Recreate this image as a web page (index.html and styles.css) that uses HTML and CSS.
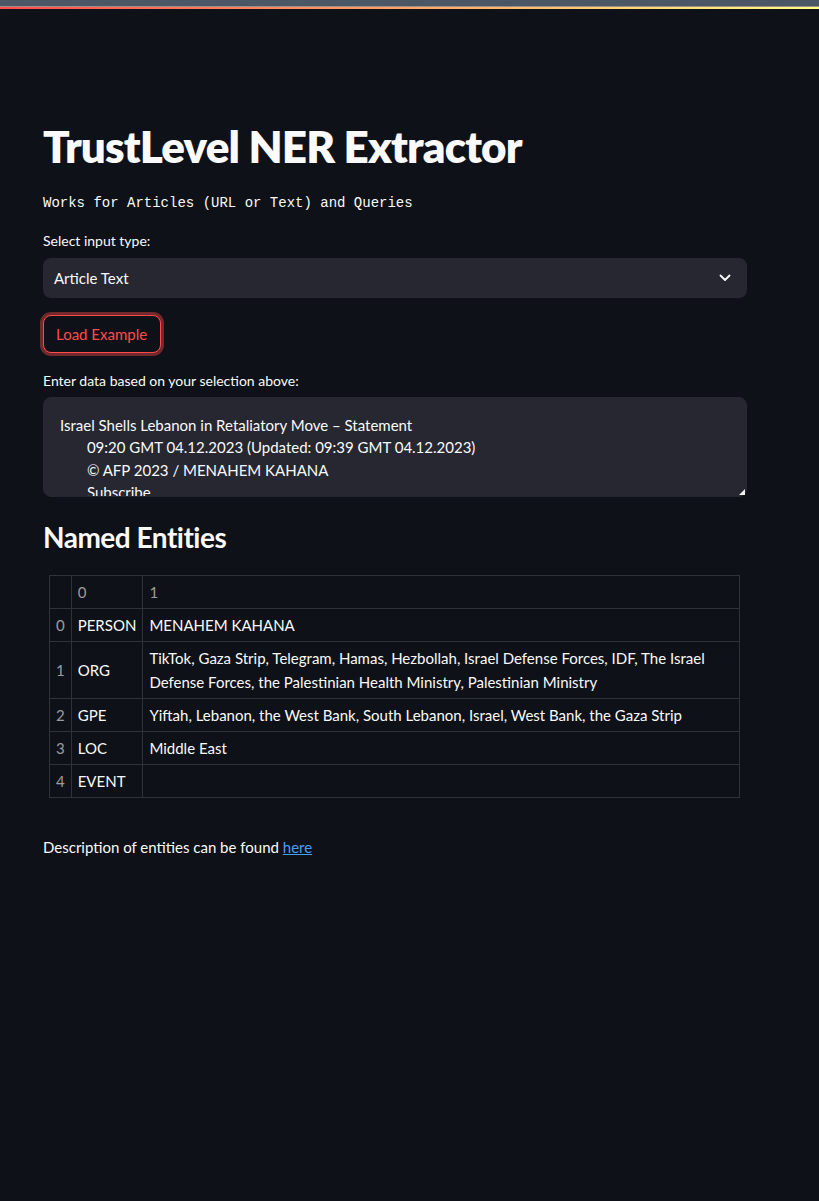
FILE: index.html
```html
<!DOCTYPE html>
<html lang="en">
<head>
<meta charset="utf-8">
<title>TrustLevel NER Extractor</title>
<link rel="stylesheet" href="styles.css">
</head>
<body>
<div class="chrome"></div>
<div class="chrome-line"></div>
<div class="decoration"></div>
<main class="main">
  <h1 class="title">TrustLevel NER Extractor</h1>
  <p class="subtitle">Works for Articles (URL or Text) and Queries</p>

  <label class="field-label label-select">Select input type:</label>
  <div class="select">
    <span class="select-value">Article Text</span>
    <svg class="chevron" width="12" height="8" viewBox="0 0 12 8"><path d="M1.5 1.5 L6 6 L10.5 1.5" fill="none" stroke="#fafafa" stroke-width="1.8" stroke-linecap="round" stroke-linejoin="round"/></svg>
  </div>

  <div class="button-row"><button class="btn">Load Example</button></div>

  <label class="field-label label-text">Enter data based on your selection above:</label>
  <div class="textarea-wrap">
    <textarea class="textarea">Israel Shells Lebanon in Retaliatory Move – Statement
       09:20 GMT 04.12.2023 (Updated: 09:39 GMT 04.12.2023)
       © AFP 2023 / MENAHEM KAHANA
       Subscribe
       The Israel Defense Forces said it shelled the area.</textarea>
    <span class="resizer"></span>
  </div>

  <h3 class="section-title">Named Entities</h3>

  <div class="table-wrap">
    <table class="table">
      <thead>
        <tr><th class="idx"></th><th class="c0">0</th><th>1</th></tr>
      </thead>
      <tbody>
        <tr><th class="idx">0</th><td>PERSON</td><td>MENAHEM KAHANA</td></tr>
        <tr><th class="idx">1</th><td>ORG</td><td>TikTok, Gaza Strip, Telegram, Hamas, Hezbollah, Israel Defense Forces, IDF, The Israel Defense Forces, the Palestinian Health Ministry, Palestinian Ministry</td></tr>
        <tr><th class="idx">2</th><td>GPE</td><td>Yiftah, Lebanon, the West Bank, South Lebanon, Israel, West Bank, the Gaza Strip</td></tr>
        <tr><th class="idx">3</th><td>LOC</td><td>Middle East</td></tr>
        <tr><th class="idx">4</th><td>EVENT</td><td></td></tr>
      </tbody>
    </table>
  </div>

  <p class="desc">Description of entities can be found <a href="#">here</a></p>
</main>
</body>
</html>
```
FILE: styles.css
```css
html, body {
  margin: 0;
  padding: 0;
  background: #0e1117;
  color: #fafafa;
  font-family: Lato, "Open Sans", sans-serif;
  color-scheme: dark;
}

.chrome {
  height: 6px;
  background: #4b5764;
}
.chrome-line {
  height: 1px;
  background: #9a8f88;
}
.decoration {
  height: 2px;
  background: linear-gradient(90deg, rgb(255, 75, 75), rgb(255, 253, 128));
}

.main {
  width: 704px;
  padding-left: 43px;
  display: flex;
  flex-direction: column;
  align-items: flex-start;
}

.title {
  margin: 111px 0 0 0;
  font-size: 44px;
  line-height: 52px;
  font-weight: 800;
  letter-spacing: -0.85px;
}

.subtitle {
  margin: 21px 0 0 0;
  font-family: "Liberation Mono", "DejaVu Sans Mono", monospace;
  font-size: 14px;
  line-height: 20px;
}

.field-label {
  font-size: 14px;
  line-height: 20px;
}
.label-select { margin-top: 18px; }
.label-text { margin-top: 18px; }

.select {
  margin-top: 7px;
  width: 704px;
  height: 40px;
  box-sizing: border-box;
  background: #262730;
  border-radius: 8px;
  display: flex;
  align-items: center;
  justify-content: space-between;
  padding: 0 16px 0 11px;
  font-size: 15px;
}
.chevron { display: block; }

.button-row { margin-top: 17px; }
.btn {
  font-family: inherit;
  font-size: 15px;
  line-height: 24px;
  color: rgb(255, 75, 75);
  background: #0e1117;
  border: 1px solid rgb(255, 75, 75);
  border-radius: 8px;
  padding: 6px 13px 6px 12px;
  box-shadow: 0 0 0 3px rgba(255, 75, 75, 0.42);
}

.textarea-wrap {
  margin-top: 6px;
  position: relative;
  width: 704px;
  height: 100px;
}
.textarea {
  display: block;
  width: 704px;
  height: 100px;
  box-sizing: border-box;
  background: #262730;
  color: #fafafa;
  border: 1px solid #262730;
  border-radius: 8px;
  padding: 16px 16px;
  font-family: inherit;
  font-size: 15px;
  line-height: 22.4px;
  resize: none;
  overflow: hidden;
  outline: none;
}
.resizer {
  position: absolute;
  right: 2px;
  bottom: 2px;
  width: 0;
  height: 0;
  border-style: solid;
  border-width: 0 0 6px 6px;
  border-color: transparent transparent #f0f0f0 transparent;
}

.section-title {
  margin: 22px 0 0 0;
  font-size: 28px;
  line-height: 36px;
  font-weight: 700;
  letter-spacing: -0.5px;
}

.table-wrap {
  margin-top: 20px;
  width: 704px;
  box-sizing: border-box;
  padding: 0 7px 0 6px;
}
.table {
  width: 100%;
  border-collapse: collapse;
  font-size: 15px;
  line-height: 24px;
}
.table th, .table td {
  border: 1px solid #2f3238;
  padding: 4px 6px;
  text-align: left;
  vertical-align: middle;
  font-weight: 400;
}
.table thead th {
  color: rgba(250, 250, 250, 0.6);
}
.table th.idx {
  width: 8px;
  color: rgba(250, 250, 250, 0.6);
}
.table th.c0 { width: 56px; }

.desc {
  margin: 37px 0 0 0;
  font-size: 15px;
  line-height: 24px;
}
.desc a {
  color: #4a9ff5;
  text-decoration: underline;
}
```
